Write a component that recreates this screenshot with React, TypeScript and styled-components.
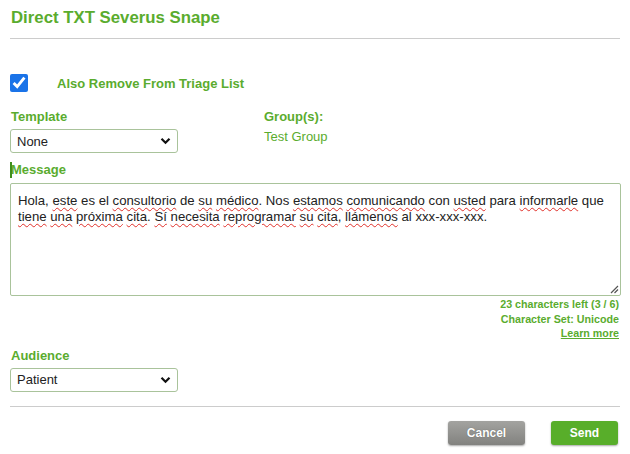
import React from "react";
import styled, { createGlobalStyle } from "styled-components";

const Global = createGlobalStyle`
  html, body { margin: 0; padding: 0; background: #fff; }
  body { font-family: "Liberation Sans", Arial, sans-serif; }
`;

const GREEN = "#5aac2e";

const Dialog = styled.div`
  width: 630px;
  height: 454px;
  box-sizing: border-box;
  padding: 8px 10px 0 10px;
  display: flex;
  flex-direction: column;
`;

const Title = styled.h1`
  margin: 0 0 0 1px;
  font-size: 16.8px;
  font-weight: bold;
  color: ${GREEN};
  line-height: 20px;
`;

const Divider = styled.hr<{ $top: number }>`
  margin: ${(p) => p.$top}px 0 0 0;
  border: none;
  border-top: 1px solid #cccccc;
  width: 610px;
`;

const CheckRow = styled.label`
  display: flex;
  align-items: center;
  margin-top: 35px;
  height: 18px;
`;

const Check = styled.input`
  width: 18px;
  height: 18px;
  margin: 0;
  accent-color: #1a73e8;
`;

const CheckLabel = styled.span`
  margin-left: 29px;
  font-size: 13px;
  font-weight: bold;
  color: ${GREEN};
`;

const Columns = styled.div`
  display: flex;
  margin-top: 17px;
`;

const Column = styled.div<{ $width: number }>`
  width: ${(p) => p.$width}px;
  display: flex;
  flex-direction: column;
`;

const Label = styled.div<{ $caret?: boolean }>`
  font-size: 13px;
  font-weight: bold;
  color: ${GREEN};
  line-height: 16px;
  margin-left: 1px;
  position: relative;
  ${(p) =>
    p.$caret &&
    `&::before { content: ""; position: absolute; left: -1px; top: 0; width: 2px; height: 16px; background: #3f8f1c; }`}
`;

const Value = styled.div`
  font-size: 13px;
  color: ${GREEN};
  line-height: 16px;
  margin-top: 4px;
  margin-left: 1px;
`;

const SelectBox = styled.div`
  margin-top: 4px;
  width: 168px;
  height: 24px;
  box-sizing: border-box;
  border: 1px solid #a9c39b;
  border-radius: 3px;
  display: flex;
  align-items: center;
  justify-content: space-between;
  padding: 0 6px 0 6px;
  font-size: 13px;
  color: #222;
  background: #fff;
`;

const Chevron = () => (
  <svg width="11" height="8" viewBox="0 0 11 8">
    <path d="M1.5 1.8 L5.5 5.8 L9.5 1.8" fill="none" stroke="#111" strokeWidth="2.2" />
  </svg>
);

const MessageLabelWrap = styled.div`
  margin-top: 9px;
`;

const TextArea = styled.div`
  position: relative;
  margin-top: 5px;
  width: 611px;
  height: 113px;
  box-sizing: border-box;
  border: 1px solid #a9c39b;
  border-radius: 2px;
  padding: 9px 7px 7px 7px;
  font-size: 13.2px;
  line-height: 16px;
  color: #222;
`;

const Spell = styled.span`
  text-decoration: underline wavy #e0302a;
  text-decoration-thickness: 1px;
  text-underline-offset: 2px;
`;

const Grip = styled.svg`
  position: absolute;
  right: 1px;
  bottom: 1px;
`;

const Meta = styled.div`
  display: flex;
  flex-direction: column;
  align-items: flex-end;
  margin-top: 1px;
  width: 609px;
  font-size: 10.7px;
  font-weight: bold;
  color: ${GREEN};
  line-height: 14.5px;
`;

const LearnMore = styled.a`
  color: ${GREEN};
  text-decoration: underline;
`;

const AudienceWrap = styled.div`
  margin-top: 7px;
`;

const Footer = styled.div`
  display: flex;
  justify-content: flex-end;
  gap: 26px;
  margin-top: 14px;
  width: 608px;
`;

const Button = styled.button<{ $variant: "gray" | "green" }>`
  height: 24px;
  border: none;
  border-radius: 3px;
  font-family: "Liberation Sans", Arial, sans-serif;
  font-size: 12px;
  font-weight: bold;
  color: #fff;
  padding: 0;
  width: ${(p) => (p.$variant === "gray" ? 77 : 67)}px;
  background: ${(p) =>
    p.$variant === "gray"
      ? "linear-gradient(#a3a3a0, #82827f)"
      : "#58ae2a"};
  box-shadow: 0 1px 2px rgba(0,0,0,0.35);
  text-shadow: ${(p) => (p.$variant === "gray" ? "0 0 1px rgba(0,0,0,0.4)" : "none")};
`;

export default function App() {
  return (
    <>
      <Global />
      <Dialog>
        <Title>Direct TXT Severus Snape</Title>
        <Divider $top={10} />
        <CheckRow>
          <Check type="checkbox" defaultChecked />
          <CheckLabel>Also Remove From Triage List</CheckLabel>
        </CheckRow>
        <Columns>
          <Column $width={253}>
            <Label>Template</Label>
            <SelectBox>
              <span>None</span>
              <Chevron />
            </SelectBox>
          </Column>
          <Column $width={200}>
            <Label>Group(s):</Label>
            <Value>Test Group</Value>
          </Column>
        </Columns>
        <MessageLabelWrap>
          <Label $caret>Message</Label>
        </MessageLabelWrap>
        <TextArea>
          Hola, <Spell>este</Spell> es el <Spell>consultorio</Spell> de <Spell>su</Spell>{" "}
          <Spell>médico</Spell>. Nos <Spell>estamos</Spell> <Spell>comunicando</Spell> con{" "}
          <Spell>usted</Spell> para <Spell>informarle</Spell> que <Spell>tiene</Spell>{" "}
          <Spell>una</Spell> <Spell>próxima</Spell> <Spell>cita</Spell>. <Spell>Sí</Spell>{" "}
          <Spell>necesita</Spell> <Spell>reprogramar</Spell> <Spell>su</Spell>{" "}
          <Spell>cita</Spell>, <Spell>llámenos</Spell> al xxx-xxx-xxx.
          <Grip width="10" height="10" viewBox="0 0 10 10">
            <path d="M2 9 L9 2 M5.5 9 L9 5.5" stroke="#555" strokeWidth="1.2" />
          </Grip>
        </TextArea>
        <Meta>
          <span>23 characters left (3 / 6)</span>
          <span>Character Set: Unicode</span>
          <LearnMore href="#">Learn more</LearnMore>
        </Meta>
        <AudienceWrap>
          <Label>Audience</Label>
          <SelectBox>
            <span>Patient</span>
            <Chevron />
          </SelectBox>
        </AudienceWrap>
        <Divider $top={14} />
        <Footer>
          <Button $variant="gray">Cancel</Button>
          <Button $variant="green">Send</Button>
        </Footer>
      </Dialog>
    </>
  );
}
